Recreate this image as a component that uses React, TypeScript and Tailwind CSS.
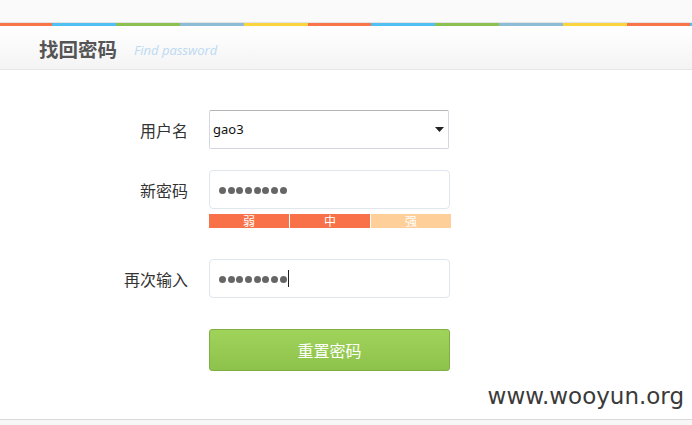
import React from "react";

const stripe = [
  { w: 52, c: "bg-[#f87549]" },
  { w: 64, c: "bg-[#50bff2]" },
  { w: 64, c: "bg-[#8cc152]" },
  { w: 64, c: "bg-[#8cbcd6]" },
  { w: 64, c: "bg-[#fbd540]" },
  { w: 63, c: "bg-[#f87549]" },
  { w: 64, c: "bg-[#50bff2]" },
  { w: 64, c: "bg-[#8cc152]" },
  { w: 64, c: "bg-[#8cbcd6]" },
  { w: 64, c: "bg-[#fbd540]" },
  { w: 63, c: "bg-[#f87549]" },
  { w: 2, c: "bg-[#50bff2]" },
];

const cjk = "font-['Microsoft_YaHei','Noto_Sans_CJK_SC',sans-serif]";

function Dots() {
  return (
    <span className="flex gap-[1.7px] mt-[2px]">
      {Array.from({ length: 8 }).map((_, i) => (
        <span key={i} className="w-[7px] h-[7px] rounded-full bg-[#666]" />
      ))}
    </span>
  );
}

export default function App() {
  return (
    <div className={`w-[692px] h-[425px] bg-white overflow-hidden flex flex-col ${cjk}`}>
      {/* top strip */}
      <div className="h-[23px] bg-[#fafafa] border-b border-[#e4e4e4] shrink-0" />
      <div className="flex h-[3px] shrink-0">
        {stripe.map((s, i) => (
          <div key={i} className={`${s.c} h-full shrink-0`} style={{ width: s.w }} />
        ))}
      </div>

      {/* header */}
      <div className="h-[44px] shrink-0 bg-gradient-to-b from-white to-[#f4f4f4] border-b border-[#e6e6e6] flex items-center pl-[39px] pt-[2px]">
        <span className="text-[19.5px] font-bold text-[#555] leading-none">找回密码</span>
        <span className="ml-[17px] mt-[4px] text-[13px] italic text-[#bcd9f2] font-['Open_Sans',sans-serif]">
          Find password
        </span>
      </div>

      {/* form */}
      <div className="flex-1 relative pt-[40px]">
        <div className="flex items-center h-[39px]">
          <label className="w-[188px] text-right text-[16px] text-[#333]">用户名</label>
          <div className="ml-[21px] w-[240px] h-[39px] border border-[#d4d8de] border-t-[#b5b5b5] rounded-[2px] flex items-center px-[3px] justify-between bg-white">
            <span className="text-[13px] text-[#111] font-['Noto_Sans',sans-serif]">gao3</span>
            <svg width="9" height="5" viewBox="0 0 9 5" className="mr-[1px]">
              <path d="M0 0h9L4.5 5z" fill="#222" />
            </svg>
          </div>
        </div>

        <div className="flex items-center h-[39px] mt-[21px]">
          <label className="w-[188px] text-right text-[16px] text-[#333]">新密码</label>
          <div className="ml-[21px] w-[241px] h-[39px] border border-[#dfe6ee] rounded-[4px] flex items-center pl-[9px] bg-white">
            <Dots />
          </div>
        </div>
        <div className="flex ml-[209px] mt-[5px] w-[242px] h-[14px] gap-[1px] text-[12px] text-white leading-[14px]">
          <div className="flex-1 bg-[#f87148] text-center">弱</div>
          <div className="flex-1 bg-[#f87148] text-center">中</div>
          <div className="flex-1 bg-[#fecf98] text-center">强</div>
        </div>

        <div className="flex items-center h-[39px] mt-[31px]">
          <label className="w-[188px] text-right text-[16px] text-[#333]">再次输入</label>
          <div className="ml-[21px] w-[241px] h-[39px] border border-[#dfe6ee] rounded-[4px] flex items-center pl-[9px] bg-white">
            <Dots />
            <span className="w-[1px] h-[17px] bg-[#222] ml-[1px]" />
          </div>
        </div>

        <div className="ml-[209px] mt-[31px] w-[241px] h-[42px] rounded-[3px] border border-[#7fae45] bg-gradient-to-b from-[#a0d35a] to-[#8dc24c] flex items-center justify-center text-[16px] text-white">
          重置密码
        </div>

        <div className="absolute right-[8px] bottom-[11px] text-[23px] text-[#3a3a3a] font-['DejaVu_Sans',sans-serif] leading-none">
          www.wooyun.org
        </div>
      </div>

      {/* footer */}
      <div className="h-[6px] shrink-0 border-t border-[#d9d9d9] bg-[#f7f7f7]" />
    </div>
  );
}
